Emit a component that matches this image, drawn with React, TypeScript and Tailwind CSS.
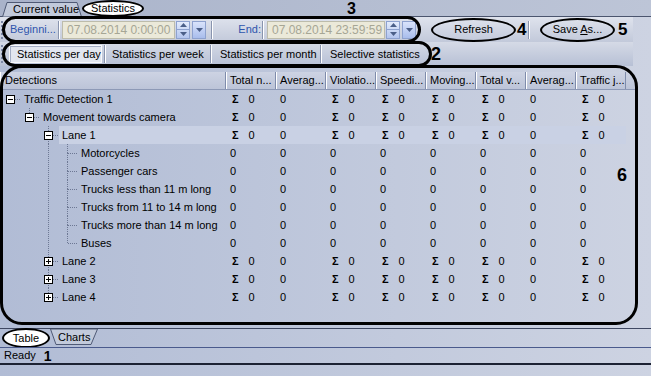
import React from "react";

type Row = {
  label: string;
  level: number;
  kind: "open" | "closed" | "leaf";
  rails: boolean[];
  top: boolean;
  bottom: boolean;
  sum: boolean;
  hl?: boolean;
};

const leaves = [
  "Motorcycles",
  "Passenger cars",
  "Trucks less than 11 m long",
  "Trucks from 11 to 14 m long",
  "Trucks more than 14 m long",
  "Buses",
];

const rows: Row[] = [
  { label: "Traffic Detection 1", level: 0, kind: "open", rails: [], top: false, bottom: false, sum: true },
  { label: "Movement towards camera", level: 1, kind: "open", rails: [false], top: true, bottom: false, sum: true },
  { label: "Lane 1", level: 2, kind: "open", rails: [false, false], top: true, bottom: true, sum: true, hl: true },
  ...leaves.map((l, i) => ({
    label: l,
    level: 3,
    kind: "leaf" as const,
    rails: [false, false, true],
    top: true,
    bottom: i < leaves.length - 1,
    sum: false,
  })),
  { label: "Lane 2", level: 2, kind: "closed", rails: [false, false], top: true, bottom: true, sum: true },
  { label: "Lane 3", level: 2, kind: "closed", rails: [false, false], top: true, bottom: true, sum: true },
  { label: "Lane 4", level: 2, kind: "closed", rails: [false, false], top: true, bottom: false, sum: true },
];

const columns = ["Total n...", "Averag...", "Violatio...", "Speedi...", "Moving...", "Total v...", "Averag...", "Traffic j..."];
// which columns show a sigma on summary rows
const sigma = [true, false, true, true, true, true, false, true];

const DOT = "#6d7894";

function Rail({ on }: { on: boolean }) {
  return (
    <svg width="19" height="18" className="shrink-0">
      {on && <line x1="9.5" y1="0" x2="9.5" y2="18" stroke={DOT} strokeDasharray="1 1" />}
    </svg>
  );
}

function Knot({ row }: { row: Row }) {
  return (
    <svg width="20" height="18" className="shrink-0">
      {row.top && <line x1="9.5" y1="0" x2="9.5" y2="9" stroke={DOT} strokeDasharray="1 1" />}
      {row.bottom && <line x1="9.5" y1="9" x2="9.5" y2="18" stroke={DOT} strokeDasharray="1 1" />}
      <line x1={row.kind === "leaf" ? 10 : 14} y1="9.5" x2="20" y2="9.5" stroke={DOT} strokeDasharray="1 1" />
      {row.kind !== "leaf" && (
        <g>
          <rect x="5.5" y="5.5" width="8" height="8" fill="#ffffff" stroke="#000000" />
          <line x1="7" y1="9.5" x2="12" y2="9.5" stroke="#000000" />
          {row.kind === "closed" && <line x1="9.5" y1="7" x2="9.5" y2="12" stroke="#000000" />}
        </g>
      )}
    </svg>
  );
}

function Grip() {
  return <div className="ml-[1px] w-[3px] h-[18px] border-l-2 border-dotted border-[#7c88a6]" />;
}

function Sep({ className = "" }: { className?: string }) {
  return <div className={"w-[2px] h-[18px] border-l border-[#8994ae] border-r border-r-white " + className} />;
}

function Spin() {
  return (
    <div className="ml-[1px] w-[14px] h-[18px] flex flex-col border border-[#8ea2cf] bg-gradient-to-b from-[#e4ecfc] to-[#b3c5ee]">
      <div className="flex-1 flex items-center justify-center border-b border-[#8ea2cf]">
        <svg width="7" height="4"><polygon points="0,4 3.5,0 7,4" fill="#4b5f88" /></svg>
      </div>
      <div className="flex-1 flex items-center justify-center">
        <svg width="7" height="4"><polygon points="0,0 3.5,4 7,0" fill="#4b5f88" /></svg>
      </div>
    </div>
  );
}

function Drop() {
  return (
    <div className="ml-[2px] w-[14px] h-[18px] flex items-center justify-center border border-[#8ea2cf] bg-gradient-to-b from-[#d9e3fb] to-[#a9bdec]">
      <svg width="7" height="4"><polygon points="0,0 3.5,4 7,0" fill="#4b5f88" /></svg>
    </div>
  );
}

function DateBox({ value, w }: { value: string; w: string }) {
  return (
    <div className={"h-[18px] flex items-center pl-[4px] border border-[#bdbcab] bg-[#ebe9d9] text-[12px] text-[#a6a695] " + w}>
      {value}
    </div>
  );
}

export default function App() {
  return (
    <div className="relative w-[651px] h-[376px] overflow-hidden flex flex-col bg-gradient-to-r from-[#b1bcd5] to-[#cdd3e2] font-['Liberation_Sans',Arial,sans-serif] text-[11px] leading-none text-black">
      {/* top tab strip */}
      <div className="h-[17px] shrink-0 flex items-start border-b border-[#4b556e] bg-gradient-to-r from-[#a9b3ca] to-[#bdc5d7] pl-[2px]">
        <div className="relative w-[80px] h-[16px] mt-[1px] flex items-center pl-[11px]">
          <svg width="80" height="16" className="absolute inset-0">
            <polygon points="0.5,16 5,1.5 75,1.5 79.5,16" fill="#c2cadb" stroke="#4f5a75" />
          </svg>
          <span className="relative">Current value</span>
        </div>
        <div className="h-[17px] w-[62px] flex items-center justify-center rounded-[50%] border-2 border-black bg-white">
          Statistics
        </div>
        <span className="ml-[203px] mt-[1px] text-[16px] font-bold">3</span>
      </div>

      {/* date toolbar */}
      <div className="h-[25px] shrink-0 w-[633px] flex items-center bg-gradient-to-b from-[#dfe3ed] to-[#c2c9da]">
        <Grip />
        <span className="ml-[6px] w-[48px] text-[#2f55ad]">Beginni...</span>
        <Sep />
        <DateBox value="07.08.2014 0:00:00" w="ml-[2px] w-[113px]" />
        <Spin />
        <Drop />
        <Sep className="ml-[5px]" />
        <span className="w-[49px] text-right pr-[1px] text-[#2f55ad]">End:</span>
        <Sep />
        <DateBox value="07.08.2014 23:59:59" w="ml-[3px] w-[118px]" />
        <Spin />
        <Drop />
        <div className="ml-[15px] w-[85px] h-[24px] flex items-center justify-center rounded-[50%] border-2 border-black">
          Refresh
        </div>
        <span className="ml-[1px] w-[11px] text-[17px] font-bold">4</span>
        <Sep />
        <div className="ml-[10px] w-[75px] h-[24px] flex items-center justify-center rounded-[50%] border-2 border-black">
          <span>
            Save <span className="underline">A</span>s...
          </span>
        </div>
        <span className="ml-[3px] text-[17px] font-bold">5</span>
      </div>

      {/* period toolbar */}
      <div className="h-[24px] shrink-0 w-[633px] flex items-center bg-gradient-to-b from-[#d5dae6] to-[#b7c0d5]">
        <Grip />
        <div className="ml-[5px] w-[93px] h-[18px] flex items-center pl-[7px] bg-[#e2e6ef] border border-[#f8f9fc] shadow-[inset_1px_1px_0_#a3adc4]">
          Statistics per day
        </div>
        <Sep className="ml-[2px]" />
        <div className="w-[104px] pl-[6px]">Statistics per week</div>
        <Sep />
        <div className="w-[108px] pl-[8px]">Statistics per month</div>
        <Sep />
        <div className="w-[100px] pl-[8px]">Selective statistics</div>
        <span className="ml-[9px] text-[18px] font-bold">2</span>
      </div>

      {/* grid */}
      <div className="flex-1 pt-[6px] w-[636px]">
        <div className="h-[18px] flex bg-gradient-to-b from-[#cdd3e3] to-[#bcc4d8] border-b border-[#8d99b6]">
          <div className="w-[226px] flex items-center pl-[4px] border-l border-white border-r border-r-[#7f8cab]">
            Detections
          </div>
          {columns.map((c, i) => (
            <div key={i} className="w-[50px] flex items-center pl-[3px] border-l border-white border-r border-r-[#7f8cab] whitespace-nowrap overflow-hidden">
              {c}
            </div>
          ))}
        </div>
        {rows.map((r, ri) => (
          <div key={ri} className="h-[18px] flex">
            <div className="w-[226px] h-full flex pl-[1px]">
              {r.rails.map((on, k) => (
                <Rail key={k} on={on} />
              ))}
              <Knot row={r} />
              <div className={"flex-1 h-full flex items-center pl-[3px] whitespace-nowrap " + (r.hl ? "bg-[#c9d1e4]" : "")}>
                {r.label}
              </div>
            </div>
            <div className={"flex h-full " + (r.hl ? "bg-[#c9d1e4]" : "")}>
              {columns.map((_, ci) => (
                <div key={ci} className="w-[50px] h-full flex items-center">
                  {r.sum && sigma[ci] ? (
                    <>
                      <span className="ml-[6px] font-bold">Σ</span>
                      <span className="ml-[10px]">0</span>
                    </>
                  ) : (
                    <span className="ml-[4px]">0</span>
                  )}
                </div>
              ))}
            </div>
          </div>
        ))}
      </div>

      {/* bottom tabs */}
      <div className="h-[19px] shrink-0 flex items-start border-t border-[#3f4862] pl-[2px]">
        <div className="-mt-[1px] w-[48px] h-[20px] flex items-center justify-center rounded-[50%] border-2 border-black bg-white">
          Table
        </div>
        <div className="relative w-[48px] h-[17px] flex items-center pl-[8px]">
          <svg width="48" height="17" className="absolute inset-0">
            <polygon points="0.5,0 6,15.5 41,15.5 47.5,0" fill="#c2cadb" stroke="#4f5a75" />
          </svg>
          <span className="relative">Charts</span>
        </div>
      </div>

      {/* status */}
      <div className="h-[18px] shrink-0 flex items-center pl-[4px] border-t border-[#4a5a8c] border-b-2 border-b-[#1c2233]">
        <span>Ready</span>
        <span className="ml-[8px] text-[14px] font-bold">1</span>
      </div>
      <div className="h-[11px] shrink-0" />

      {/* callout marks */}
      <div className="absolute left-[2px] top-[16px] w-[419px] h-[27px] rounded-full border-[3px] border-black pointer-events-none" />
      <div className="absolute left-[2px] top-[41px] w-[430px] h-[26px] rounded-full border-[3px] border-black pointer-events-none" />
      <div className="absolute left-[0px] top-[65px] w-[638px] h-[260px] rounded-[22px] border-[3px] border-black pointer-events-none" />
      <span className="absolute left-[617px] top-[166px] text-[18px] font-bold">6</span>
    </div>
  );
}
